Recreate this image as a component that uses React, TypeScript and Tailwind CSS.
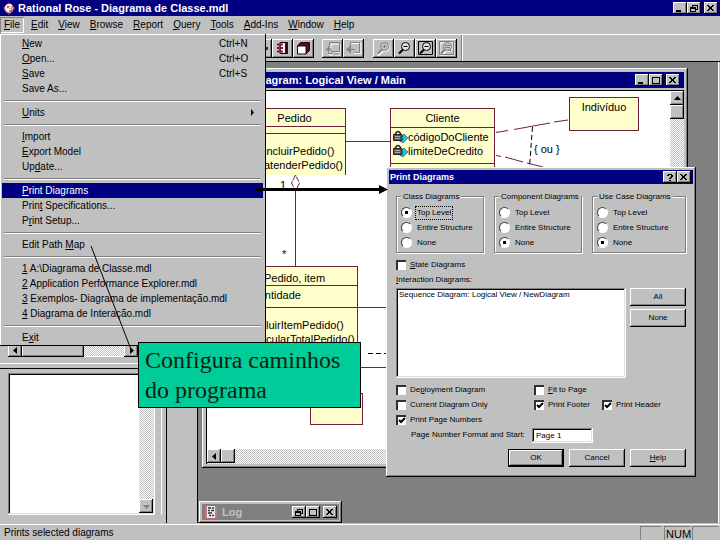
import { ReactNode } from "react"

const raised = "bg-[#c0c0c0] shadow-[inset_-1px_-1px_#000,inset_1px_1px_#fff,inset_-2px_-2px_#808080]"
const sunken = "bg-white shadow-[inset_-1px_-1px_#fff,inset_1px_1px_#808080,inset_-2px_-2px_#dfdfdf,inset_2px_2px_#000]"
const dither = "bg-[conic-gradient(#fff_25%,#c0c0c0_0_50%,#fff_0_75%,#c0c0c0_0)] bg-[length:2px_2px]"

type MenuEntry = { label: string; hot: number; keys?: string; sub?: boolean; active?: boolean }

const menuBar = ["File", "Edit", "View", "Browse", "Report", "Query", "Tools", "Add-Ins", "Window", "Help"]

const fileMenu: MenuEntry[][] = [
    [
        { label: "New", hot: 0, keys: "Ctrl+N" },
        { label: "Open...", hot: 0, keys: "Ctrl+O" },
        { label: "Save", hot: 0, keys: "Ctrl+S" },
        { label: "Save As...", hot: -1 },
    ],
    [{ label: "Units", hot: 0, sub: true }],
    [
        { label: "Import", hot: 0 },
        { label: "Export Model", hot: 0 },
        { label: "Update...", hot: 2 },
    ],
    [
        { label: "Print Diagrams", hot: 0, active: true },
        { label: "Print Specifications...", hot: 4 },
        { label: "Print Setup...", hot: 1 },
    ],
    [{ label: "Edit Path Map", hot: 10 }],
    [
        { label: "1 A:\\Diagrama de Classe.mdl", hot: 0 },
        { label: "2 Application Performance Explorer.mdl", hot: 0 },
        { label: "3 Exemplos- Diagrama de implementação.mdl", hot: 0 },
        { label: "4 Diagrama de Interação.mdl", hot: 0 },
    ],
    [{ label: "Exit", hot: 1 }],
]

function Hot({ text, at }: { text: string; at: number }) {
    if (at < 0) return <span>{text}</span>
    return (
        <span>
            {text.slice(0, at)}
            <u>{text[at]}</u>
            {text.slice(at + 1)}
        </span>
    )
}

function WinButton({ kind }: { kind: "min" | "max" | "restore" | "close" | "help" }) {
    return (
        <button aria-label={kind} className={`flex h-3 w-3.5 items-center justify-center ${raised}`}>
            <svg width="10" height="9" viewBox="0 0 10 9" fill="none" stroke="#000" shapeRendering="crispEdges">
                {kind === "min" && <path d="M1 7h5" strokeWidth="2" />}
                {kind === "max" && <path d="M1.5 1.5h7v6h-7zM1 1.5h8" />}
                {kind === "restore" && <path d="M3.5 3V1.5h5v4H7M3 1.5h6M1.5 4.5h5v3h-5zM1 3.5h6" />}
                {kind === "close" && <path d="M1 1l6 6M7 1L1 7M2 1l6 6M8 1L2 7" />}
                {kind === "help" && <path d="M2 2.5h2M3 1.5h4M6 2.5h2M6 3.5h2M5 4.5h2M4 5.5h2M4 7.5h2" />}
            </svg>
        </button>
    )
}

function ScrollButton({ dir, off }: { dir: "left" | "right" | "up" | "down"; off?: boolean }) {
    const shapes = {
        left: "M6 1v7L2 4.5z",
        right: "M3 1v7l4-3.5z",
        up: "M1 6h7L4.5 2z",
        down: "M1 3h7L4.5 7z",
    }
    return (
        <button aria-label={`scroll ${dir}`} className={`flex size-3.5 shrink-0 items-center justify-center ${raised}`}>
            <svg width="9" height="9" viewBox="0 0 9 9">
                <path d={shapes[dir]} fill={off ? "#808080" : "#000"} />
            </svg>
        </button>
    )
}

function ToolButton({ label, children }: { label: string; children: ReactNode }) {
    return (
        <button aria-label={label} className={`flex h-[19px] w-[21px] items-center justify-center ${raised}`}>
            <svg width="17" height="15" viewBox="0 0 17 15" fill="none">{children}</svg>
        </button>
    )
}

function Lens({ off, sign, box }: { off?: boolean; sign: "+" | "-" | "fit"; box?: boolean }) {
    const color = off ? "#808080" : "#000"
    const signs = {
        "+": "M7.500 5.500h4M9.500 3.500v4",
        "-": "M7.500 5.500h4",
        "fit": "M7 4.500h5M7 6.500h5M10 9.500h3",
    }
    return (
        <>
            {off && <circle cx="10.500" cy="6.500" r="4" stroke="#fff" />}
            {off && <path d="M8 10l-5 4.500" stroke="#fff" strokeWidth="2" />}
            {off && box && <path d="M2 2h14v12H2z" stroke="#fff" />}
            {box && <path d="M1.500.500h14v13h-14z" stroke={color} />}
            <circle cx="9.500" cy="5.500" r="4" fill={off ? "#c8c8c8" : "#e4e4e4"} stroke={color} />
            <path d="M7 8.500l-4 4" stroke={color} strokeWidth="2" />
            <path d={signs[sign]} stroke={color} />
        </>
    )
}

function MenuBar() {
    return (
        <nav className="flex h-[18px] items-center text-[10px] leading-4">
            {menuBar.map((name, i) => (
                <button
                    key={name}
                    className={i === 0
                        ? "mr-1 h-4 w-6 shadow-[inset_1px_1px_#808080,inset_-1px_-1px_#fff]"
                        : "h-4 pl-[3px] pr-[7px]"}
                >
                    <Hot text={name} at={0} />
                </button>
            ))}
        </nav>
    )
}

function Toolbar() {
    return (
        <div className="flex h-7 items-center border-b border-b-black border-t border-t-white pl-[251px] pr-0.5">
            <ToolButton label="class">
                <path d="M9 7.500h6" stroke="#701030" strokeWidth="3" />
            </ToolButton>
            <ToolButton label="component">
                <path d="M6 1.500h7.500v11H6z" fill="#fff" stroke="#000" />
                <path d="M11 2h3v10h-3z" fill="#300818" />
                <path d="M3 3.500h6M3 7h6M3 10.500h6" stroke="#801038" strokeWidth="2" />
                <path d="M6.500 3v8" stroke="#801038" />
            </ToolButton>
            <ToolButton label="deployment">
                <path d="M2.500 5l3-3.500h9v8l-3.500 3.500z" fill="#501018" stroke="#300" />
                <path d="M2.500 5h8.500v8H2.500z" fill="#fff" stroke="#300" />
            </ToolButton>
            <div className="flex pl-2">
                <ToolButton label="parent">
                    <path d="M7 7V3h9v8H9M5 8v6h4M11 14h6" stroke="#fff" />
                    <path d="M5.500 6V1.500h10v9H7M4.500 8v4.500h4M10 12.500l1 1 1-1 1 1 1-1 1 1" stroke="#808080" />
                    <path d="M1.500 9.500l3-4 3 4z" fill="#808080" />
                </ToolButton>
                <ToolButton label="previous">
                    <path d="M6 2.500h10v10H9" stroke="#fff" />
                    <path d="M5.500 6V1.500h9v10H9M6 8.500h4" stroke="#808080" />
                    <path d="M1 8.500l5-4v8z" fill="#808080" />
                </ToolButton>
            </div>
            <div className="flex pl-[9px]">
                <ToolButton label="zoom in"><Lens off sign="+" /></ToolButton>
                <ToolButton label="zoom out"><Lens sign="-" /></ToolButton>
                <ToolButton label="fit in window"><Lens sign="-" box /></ToolButton>
                <ToolButton label="undo fit"><Lens off sign="fit" box /></ToolButton>
            </div>
            <div className="ml-1 h-full w-0.5 border-l border-[#808080] bg-white" />
        </div>
    )
}

function FileMenu() {
    return (
        <div className="absolute left-0 top-[34px] w-[266px] border-b border-r border-black bg-[#c0c0c0] px-0.5 pt-0.5 text-[10px] leading-[15px] whitespace-nowrap shadow-[inset_1px_1px_#fff]">
            {fileMenu.map((group, g) => (
                <div key={g}>
                    {g > 0 && (
                        <div className="flex h-[9px] items-center px-0.5">
                            <hr className="h-0.5 grow border-b border-t border-b-white border-t-[#808080]" />
                        </div>
                    )}
                    {group.map(item => (
                        <button
                            key={item.label}
                            className={`flex h-[15px] w-full items-center justify-between pl-5 pr-2 text-left ${item.active ? "bg-[#000080] text-white" : ""}`}
                        >
                            <Hot text={item.label} at={item.hot} />
                            {item.keys && <span className="w-9">{item.keys}</span>}
                            {item.sub && (
                                <svg width="4" height="7" viewBox="0 0 4 7"><path d="M0 0v7l3-3.500z" /></svg>
                            )}
                        </button>
                    ))}
                </div>
            ))}
        </div>
    )
}

function BrowserPane() {
    return (
        <aside className="flex w-[167px] shrink-0 flex-col border-r border-black">
            <div className="flex h-[302px] flex-col border-b border-white px-2 pb-1.5">
                <div className="grow bg-white" />
                <div className={`flex h-3.5 w-[130px] border-b border-white ${dither}`}>
                    <ScrollButton dir="left" />
                    <div className={`h-3.5 w-[62px] ${raised}`} />
                    <div className="grow" />
                    <ScrollButton dir="right" />
                </div>
            </div>
            <div className="mt-1 flex grow border-t border-black pb-2 pl-2 pr-1 pt-1">
                <div className={`flex w-[147px] p-0.5 ${sunken}`}>
                    <div className="grow" />
                    <div className={`flex w-3.5 flex-col justify-end ${dither}`}>
                        <ScrollButton dir="down" off />
                    </div>
                </div>
                <div className="ml-auto w-px bg-white" />
            </div>
        </aside>
    )
}

function Attribute({ name }: { name: string }) {
    return (
        <div className="flex items-center">
            <svg width="15" height="14" viewBox="0 0 15 14">
                <path d="M5 10l6-6 4 4-5 5z" fill="#19c0f0" stroke="#035" strokeWidth="0.500" />
                <path d="M2.500 5V3.500q2.500-4 5 0V5" fill="none" stroke="#222" strokeWidth="1.500" />
                <path d="M.500 4.500h8.500v6H.500z" fill="#555" stroke="#222" />
                <path d="M2 6.500h5M2 8.500h5" stroke="#aaa" />
            </svg>
            <span>{name}</span>
        </div>
    )
}

const node = "absolute border border-[#70203a] bg-[#ffffcc]"

// Canvas of the class diagram, nodes sit at their model positions
function ClassDiagram() {
    return (
        <div className="relative grow overflow-hidden bg-white text-[11px] leading-[14px]">
            <svg className="absolute left-0 top-0" width="460" height="360" viewBox="207 91 460 360" fill="none" stroke="#70204a">
                <path d="M345 141.500h45M295.500 190v76M358 307.500h30M358 367.500h30" />
                <path d="M295.500 175l-4 8 4 8 4-8z" fill="#fff" strokeDasharray="6 1" />
                <path d="M496 132.500l12-2M514 129.500l36-6.500M554 122l14-2" />
                <path d="M496 155.500l5 1M505 157l18 5M527 163l16 4" />
                <path d="M532.500 127l-3 40M368 353.500h20" stroke="#000" strokeDasharray="5 3" />
            </svg>
            <div className={`${node} left-[36px] top-[17px] h-[67px] w-[103px] border-b-0`}>
                <p className="h-[18px] border-b border-[#70203a] pt-0.5 text-center">Pedido</p>
                <div className="h-[7px] border-b border-[#70203a]" />
                <div className="pl-5 pt-2.5">
                    <p>incluirPedido()</p>
                    <p>atenderPedido()</p>
                </div>
            </div>
            <div className={`${node} left-[183px] top-[17px] h-24 w-[105px]`}>
                <p className="h-[19px] border-b border-[#70203a] pt-0.5 text-center">Cliente</p>
                <div className="h-9 border-b border-[#70203a] pl-0.5 pt-0.5">
                    <Attribute name="códigoDoCliente" />
                    <Attribute name="limiteDeCredito" />
                </div>
            </div>
            <div className={`${node} left-[362px] top-[6px] h-[34px] w-[70px] pt-0.5 text-center`}>Indivíduo</div>
            <p className="absolute left-[327px] top-[51px]">{"{ ou }"}</p>
            <p className="absolute left-[73px] top-[87px]">1</p>
            <p className="absolute left-[75px] top-[156px]">*</p>
            <div className={`${node} left-[24px] top-[175px] h-[102px] w-[127px]`}>
                <p className="h-[19px] border-b border-[#70203a] pl-8 pt-1">Pedido, item</p>
                <p className="h-[22px] border-b border-[#70203a] pl-3 pt-0.5">Quantidade</p>
                <div className="pl-5 pt-2.5">
                    <p>incluirItemPedido()</p>
                    <p>calcularTotalPedido()</p>
                </div>
            </div>
            <div className={`${node} left-[103px] top-[302px] h-8 w-[53px]`} />
        </div>
    )
}

function DiagramWindow() {
    return (
        <section className={`absolute bottom-[55px] left-1 right-[30px] top-1.5 flex flex-col p-1 ${raised}`}>
            <header className="flex h-4 shrink-0 items-center bg-[#000080] pl-4 pr-1 text-[11px] font-bold text-white">
                <h2 className="grow">Class Diagram: Logical View / Main</h2>
                <WinButton kind="min" />
                <WinButton kind="max" />
                <span className="w-[3px]" />
                <WinButton kind="close" />
            </header>
            <div className="mt-0.5 flex grow border-l border-t border-black">
                <ClassDiagram />
                <div className={`flex w-3.5 flex-col ${dither}`}>
                    <ScrollButton dir="up" />
                    <div className={`h-3.5 ${raised}`} />
                </div>
            </div>
            <div className={`flex h-[15px] shrink-0 border-l border-black ${dither}`}>
                <ScrollButton dir="left" />
                <div className={`size-3.5 ${raised}`} />
            </div>
        </section>
    )
}

function LogWindow() {
    return (
        <section className={`absolute bottom-0 left-px w-[143px] p-[3px] ${raised}`}>
            <header className="flex h-4 items-center bg-[#808080] px-0.5 text-[11px] font-bold text-[#c0c0c0]">
                <svg width="14" height="14" viewBox="0 0 14 14">
                    <path d="M.500.500h13v13H.500z" fill="#a88" stroke="#b66" />
                    <path d="M3 1h8v12H3z" fill="#eee" />
                    <path d="M4 3h3M8 3h2M4 5.500h2M7 5.500h3M4 8h4M5 10.500h2M8 10.500h2" stroke="#333" strokeWidth="1.500" />
                </svg>
                <h2 className="grow pl-1">Log</h2>
                <WinButton kind="restore" />
                <WinButton kind="max" />
                <span className="w-[3px]" />
                <WinButton kind="close" />
            </header>
        </section>
    )
}

function Radio({ group, label, checked, focused }: { group: string; label: string; checked?: boolean; focused?: boolean }) {
    return (
        <label className="flex h-[15px] items-center gap-1">
            <span className="relative size-[11px]">
                <input type="radio" name={group} defaultChecked={checked} className="peer block size-[11px] appearance-none rounded-full border border-b-white border-l-[#404040] border-r-white border-t-[#404040] bg-white" />
                <span className="absolute left-1 top-1 hidden size-[3px] bg-black peer-checked:block" />
            </span>
            <span className={focused ? "px-px outline outline-dotted outline-black" : "px-px"}>{label}</span>
        </label>
    )
}

function RadioGroup({ title, selected }: { title: string; selected: number }) {
    return (
        <fieldset className="relative h-[57px] border border-[#808080] pl-1 pt-2 shadow-[1px_1px_#fff,inset_1px_1px_#fff]">
            <legend className="absolute -top-1.5 left-1 bg-[#c0c0c0] px-0.5 leading-3">{title}</legend>
            {["Top Level", "Entire Structure", "None"].map((label, i) => (
                <Radio key={label} group={title} label={label} checked={i === selected} focused={i === 0 && selected === 0} />
            ))}
        </fieldset>
    )
}

function Check({ label, hot = -1, checked }: { label: string; hot?: number; checked?: boolean }) {
    return (
        <label className="flex h-[15px] items-center gap-1">
            <span className="relative size-2.5">
                <input type="checkbox" defaultChecked={checked} className="peer block size-2.5 appearance-none border-l-2 border-t-2 border-[#303030] bg-white" />
                <svg className="pointer-events-none absolute left-0.5 top-0.5 hidden peer-checked:block" width="8" height="7" viewBox="0 0 8 7" fill="none">
                    <path d="M1 3l2 2 4-4" stroke="#000" strokeWidth="2" />
                </svg>
            </span>
            <Hot text={label} at={hot} />
        </label>
    )
}

function DialogButton({ label, hot = -1, primary }: { label: string; hot?: number; primary?: boolean }) {
    return (
        <button className={`h-[18px] w-14 ${raised} ${primary ? "border border-black" : ""}`}>
            <Hot text={label} at={hot} />
        </button>
    )
}

function PrintDialog() {
    return (
        <div role="dialog" aria-label="Print Diagrams" className={`absolute left-[386px] top-[167px] w-[310px] p-[3px] pb-2.5 text-[8px] leading-3 whitespace-nowrap ${raised}`}>
            <header className="flex h-3.5 items-center bg-[#000080] pl-px pr-0.5 text-[9px] font-bold text-white">
                <h2 className="grow">Print Diagrams</h2>
                <WinButton kind="help" />
                <WinButton kind="close" />
            </header>
            <div className="px-[7px] pt-3">
                <div className="grid grid-cols-[88px_88px_94px] justify-between">
                    <RadioGroup title="Class Diagrams" selected={0} />
                    <RadioGroup title="Component Diagrams" selected={2} />
                    <RadioGroup title="Use Case Diagrams" selected={2} />
                </div>
                <div className="pt-1">
                    <Check label="State Diagrams" hot={0} />
                </div>
                <label htmlFor="interaction" className="flex h-4 items-center">
                    <Hot text="Interaction Diagrams:" at={0} />
                </label>
                <div className="flex gap-1">
                    <select id="interaction" size={5} className={`h-[90px] grow appearance-none overflow-hidden p-0.5 ${sunken}`}>
                        <option className="min-h-3 p-0 pl-px">Sequence Diagram: Logical View / NewDiagram</option>
                    </select>
                    <div className="flex flex-col gap-[3px]">
                        <DialogButton label="All" />
                        <DialogButton label="None" />
                    </div>
                </div>
                <div className="grid grid-cols-[138px_68px_1fr] pt-1">
                    <Check label="Deployment Diagram" hot={2} />
                    <Check label="Fit to Page" hot={0} />
                    <span />
                    <Check label="Current Diagram Only" />
                    <Check label="Print Footer" checked />
                    <Check label="Print Header" checked />
                    <Check label="Print Page Numbers" checked />
                </div>
                <div className="flex h-4 items-center pl-[15px]">
                    <label htmlFor="format" className="w-[121px]">Page Number Format and Start:</label>
                    <input id="format" defaultValue="Page 1" className={`h-[15px] w-[61px] pl-1 ${sunken}`} />
                </div>
                <div className="flex justify-end gap-[5px] pt-1.5">
                    <DialogButton label="OK" primary />
                    <DialogButton label="Cancel" />
                    <DialogButton label="Help" hot={0} />
                </div>
            </div>
        </div>
    )
}

export default function App() {
    return (
        <div className="relative flex h-screen min-h-[540px] flex-col overflow-hidden bg-[#c0c0c0] font-['Liberation_Sans',sans-serif] text-black">
            <header className="flex h-4 shrink-0 items-center bg-[#000080] pl-[3px] pr-0.5 text-[11px] font-bold text-white">
                <svg width="12" height="13" viewBox="0 0 12 13">
                    <path d="M6 0l6 6-6 7-6-7z" fill="#a33" />
                    <circle cx="6" cy="6.500" r="4.500" fill="#d99" />
                    <path d="M9 3.500q-5-2-6 2 0 4 5 4M8 5.500q-3-1-3 1t3 1" fill="none" stroke="#fff" strokeWidth="1.500" />
                    <path d="M4 5h2M6 9h3" stroke="#700" />
                </svg>
                <h1 className="grow pl-[3px]">Rational Rose - Diagrama de Classe.mdl</h1>
                <WinButton kind="min" />
                <WinButton kind="restore" />
                <span className="w-[3px]" />
                <WinButton kind="close" />
            </header>
            <MenuBar />
            <Toolbar />
            <main className="flex grow">
                <BrowserPane />
                <div className="relative ml-[30px] mr-px grow border-l border-r border-l-black border-r-white bg-[#808080]">
                    <DiagramWindow />
                    <LogWindow />
                </div>
            </main>
            <footer className="mt-px flex h-4 shrink-0 items-end border-t border-white pl-1 pr-0.5 text-[10px] leading-[14px]">
                <span className="grow">Prints selected diagrams</span>
                <div className="flex h-3.5 gap-0.5">
                    <span className="w-[22px] border-l border-t border-[#808080]" />
                    <span className="w-[26px] border-l border-t border-[#808080] pl-px text-[11px]">NUM</span>
                    <span className="w-[26px] border-l border-t border-[#808080]" />
                </div>
            </footer>

            <FileMenu />
            <PrintDialog />

            <div className="absolute left-[138px] top-[342px] w-[223px] border border-black bg-[#00cc99] px-1.5 py-0.5 font-['Liberation_Serif',serif] text-2xl leading-[30px] text-[#102010]">
                <p>Configura caminhos do programa</p>
            </div>
            <svg className="pointer-events-none absolute left-0 top-0" width="400" height="360" viewBox="0 0 400 360">
                <path d="M91 246l41 106" stroke="#000" />
                <path d="M256 189.500h124" stroke="#000" strokeWidth="3" />
                <path d="M379 185v9l9-4.500z" />
            </svg>
        </div>
    )
}
